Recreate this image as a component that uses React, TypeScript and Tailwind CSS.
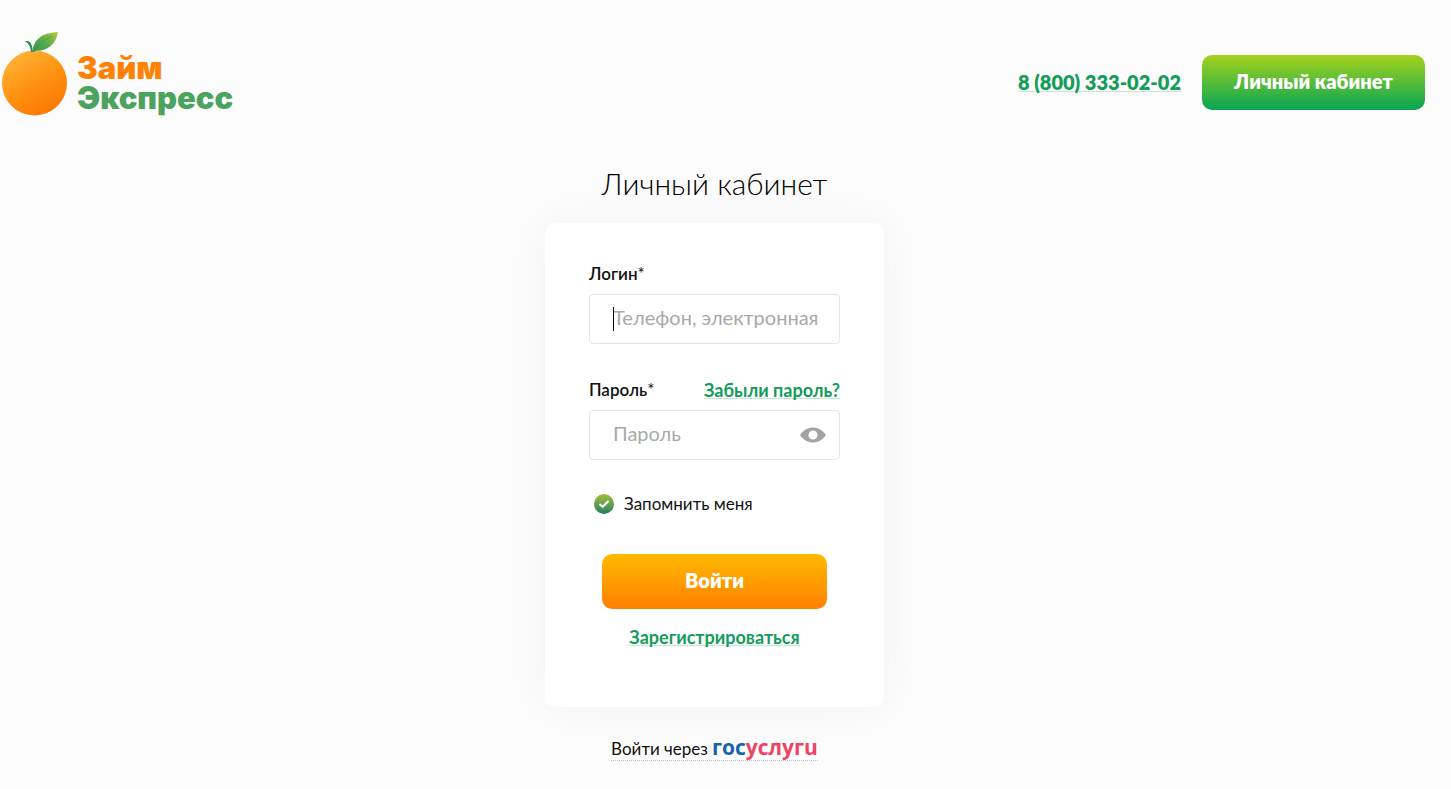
import { useState } from 'react';

function OrangeLogo() {
  return (
    <svg width="68" height="84" viewBox="0 0 68 84" aria-hidden="true" className="shrink-0">
      <defs>
        <linearGradient id="fruit" x1="0.15" y1="0.05" x2="0.7" y2="0.95">
          <stop offset="0" stopColor="#ffb43a" />
          <stop offset="0.55" stopColor="#ff9210" />
          <stop offset="1" stopColor="#fb7a03" />
        </linearGradient>
        <linearGradient id="leaf" x1="0" y1="1" x2="1" y2="0">
          <stop offset="0" stopColor="#2f9656" />
          <stop offset="0.5" stopColor="#5aab48" />
          <stop offset="1" stopColor="#b4cc3c" />
        </linearGradient>
      </defs>
      <circle cx="34.500" cy="51" r="32.500" fill="url(#fruit)" />
      <path d="M31 20C30.500 15 29 11.500 25 9.500C28 8 31 10 32 14L33 20Z" fill="#2f8f5c" />
      <path d="M32.500 20C33 8 41 1 58 0C56 12 48 19 36 18.800L34 20Z" fill="url(#leaf)" />
      <path d="M33 19.500C38 13 44 8 52 4" fill="none" stroke="#3f9d50" strokeWidth="0.800" />
    </svg>
  );
}

function EyeIcon() {
  return (
    <svg width="26" height="16" viewBox="0 0 26 16" aria-hidden="true">
      <path
        fillRule="evenodd"
        fill="#a3a3a3"
        d="M0 8C4 2.500 8 0.500 13 0.500S22 2.500 26 8C22 13.500 18 15.500 13 15.500S4 13.500 0 8ZM13 3.500A4.500 4.500 0 1 0 13 12.500A4.500 4.500 0 1 0 13 3.500Z"
      />
    </svg>
  );
}

const greenLink = 'border-b border-[#c3e6d5] font-bold text-[#139c5b]';
const field =
  'h-[50px] w-full rounded-[4px] border border-[#e3e5e5] bg-white pb-1 pl-[23px] text-[20px] text-black caret-transparent outline-none placeholder:text-[#a7a9aa] placeholder:opacity-100';

export default function App() {
  const [login, setLogin] = useState('');
  const [visible, setVisible] = useState(false);
  const [remember, setRemember] = useState(true);

  return (
    <div className="min-h-screen bg-[#fcfcfc] font-['Lato','Open_Sans',sans-serif] text-[#111]">
      <header className="flex items-start justify-between pt-8 pr-[26px]">
        <a href="#" className="flex items-start gap-[9px]">
          <OrangeLogo />
          <span className="flex flex-col pt-[21px] font-['Inter',sans-serif] text-[31px] leading-[30px] font-black">
            <span className="text-[#ff8207]">Займ</span>
            <span className="text-[#4ba35e]">Экспресс</span>
          </span>
        </a>
        <div className="flex items-center gap-[21px] pt-[23px]">
          <a href="tel:88003330202" className={`text-[20px] leading-[18px] ${greenLink} font-extrabold`}>
            8 (800) 333-02-02
          </a>
          <button
            type="button"
            className="h-[55px] w-[223px] rounded-[10px] bg-linear-to-b/srgb from-[#a6d21c] to-[#06a655] pb-1 text-[20px] font-extrabold text-white"
          >
            Личный кабинет
          </button>
        </div>
      </header>

      <main className="flex flex-col items-center pt-[47px] pr-[22px]">
        <h1 className="text-[30px] leading-[40px] font-light text-black">Личный кабинет</h1>

        <form
          onSubmit={(e) => e.preventDefault()}
          className="mt-5 flex w-[339px] flex-col rounded-[10px] bg-white px-11 pt-[39px] pb-[60px] shadow-[0_0_50px_rgba(0,60,35,0.05)]"
        >
          <label htmlFor="login" className="text-[17px] leading-[24px] font-semibold">
            Логин<span className="font-normal">*</span>
          </label>
          <div className="relative mt-2">
            <input
              id="login"
              value={login}
              onChange={(e) => setLogin(e.target.value)}
              placeholder="Телефон, электронная"
              className={field}
            />
            {login === '' && <span className="absolute top-[13px] left-6 h-6 w-px bg-black" />}
          </div>

          <div className="mt-[34px] flex items-center justify-between leading-[24px]">
            <label htmlFor="password" className="text-[17px] font-semibold">
              Пароль<span className="font-normal">*</span>
            </label>
            <a href="#" className={`text-[18px] leading-[16px] ${greenLink}`}>
              Забыли пароль?
            </a>
          </div>
          <div className="relative mt-2">
            <input
              id="password"
              type={visible ? 'text' : 'password'}
              placeholder="Пароль"
              className={field}
            />
            <button
              type="button"
              aria-label="Показать пароль"
              onClick={() => setVisible(!visible)}
              className="absolute top-[17px] right-[14px]"
            >
              <EyeIcon />
            </button>
          </div>

          <label className="mt-8 flex items-center gap-[10px] pl-[5px] text-[17px] leading-[24px]">
            <span className="relative flex">
              <input
                type="checkbox"
                checked={remember}
                onChange={(e) => setRemember(e.target.checked)}
                className="size-5 appearance-none rounded-full bg-linear-to-b from-[#a3bf37] to-[#187f58]"
              />
              {remember && (
                <svg viewBox="0 0 20 20" className="pointer-events-none absolute inset-0 size-5" aria-hidden="true">
                  <path d="M5.500 10L8.700 12.800L14.500 7" fill="none" stroke="#fff" strokeWidth="2" />
                </svg>
              )}
            </span>
            Запомнить меня
          </label>

          <button
            type="submit"
            className="mt-[38px] h-[55px] w-[225px] self-center rounded-[10px] bg-linear-to-b/srgb from-[#ffba00] to-[#ff8000] pb-1 text-[20px] font-extrabold text-white"
          >
            Войти
          </button>
          <a href="#" className={`mt-5 mb-px self-center text-[18px] leading-[16px] ${greenLink}`}>
            Зарегистрироваться
          </a>
        </form>

        <a
          href="#"
          className="mt-[29px] flex items-baseline gap-1 border-b border-dotted border-[#b9c6d0] text-[17px] leading-[22px]"
        >
          Войти через
          <span className="font-['Open_Sans',sans-serif] text-[21px] font-bold" aria-label="госуслуги">
            <span className="text-[#1565ae]">гос</span>
            <span className="text-[#ee4463]">услугu</span>
          </span>
        </a>
      </main>
    </div>
  );
}
